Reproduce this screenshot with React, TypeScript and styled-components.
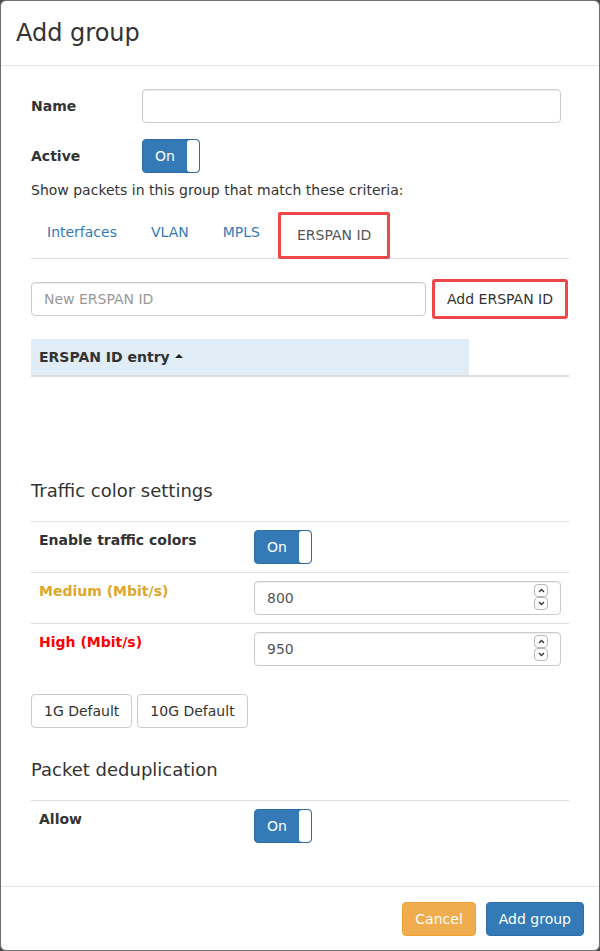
import React from "react";
import styled, { createGlobalStyle, css } from "styled-components";

const GlobalStyle = createGlobalStyle`
  * { box-sizing: border-box; }
  html, body {
    margin: 0;
    padding: 0;
    background: #4a4a4a;
    font-family: "DejaVu Sans", "Liberation Sans", sans-serif;
    font-size: 14px;
    line-height: 20px;
    color: #333;
  }
`;

const Modal = styled.div`
  display: flex;
  flex-direction: column;
  width: 600px;
  height: 951px;
  background: #fff;
  border: 1px solid #6f6f6f;
  border-radius: 6px;
  overflow: hidden;
`;

const Header = styled.div`
  padding: 15px;
  border-bottom: 1px solid #e5e5e5;
`;

const Title = styled.h4`
  margin: 0;
  font-size: 24px;
  font-weight: 400;
  line-height: 34px;
`;

const Body = styled.div`
  flex: 1;
  padding: 23px 30px 0;
`;

const FormRow = styled.div`
  display: flex;
  align-items: center;
  margin-bottom: 16px;
`;

const FieldLabel = styled.label`
  width: 111px;
  font-weight: 700;
`;

const TextInput = styled.input`
  display: block;
  height: 34px;
  padding: 6px 12px;
  font: inherit;
  color: #555;
  background: #fff;
  border: 1px solid #ccc;
  border-radius: 4px;
  box-shadow: inset 0 1px 1px rgba(0, 0, 0, 0.075);
  outline: none;
  &::placeholder { color: #999; }
`;

const NameInput = styled(TextInput)`
  width: 419px;
`;

const ToggleBox = styled.div`
  display: flex;
  width: 58px;
  height: 34px;
  background: #337ab7;
  border: 1px solid #2e6da4;
  border-radius: 4px;
  overflow: hidden;
`;

const ToggleText = styled.span`
  flex: 1;
  display: flex;
  align-items: center;
  justify-content: center;
  color: #fff;
  font-size: 14px;
`;

const ToggleKnob = styled.span`
  width: 12px;
  background: #fff;
  border-radius: 3px;
`;

function Toggle() {
  return (
    <ToggleBox>
      <ToggleText>On</ToggleText>
      <ToggleKnob />
    </ToggleBox>
  );
}

const HelpText = styled.p`
  margin: -9px 0 12px;
`;

const Tabs = styled.ul`
  display: flex;
  align-items: flex-start;
  list-style: none;
  margin: 0;
  padding: 0;
  height: 47px;
  border-bottom: 1px solid #ddd;
`;

const Tab = styled.li<{ $active?: boolean }>`
  margin-right: 2px;
  padding: 9px 15px 11px;
  border: 1px solid transparent;
  color: #337ab7;
  ${({ $active }) =>
    $active &&
    css`
      padding: 10px 16px;
      border: 3px solid #f04848;
      border-radius: 2px;
      color: #555;
      height: 47px;
    `}
`;

const AddRow = styled.div`
  display: flex;
  align-items: center;
  gap: 6px;
  margin-top: 20px;
`;

const IdInput = styled(TextInput)`
  width: 395px;
`;

const Button = styled.button<{ $variant?: "default" | "primary" | "warning"; $marked?: boolean }>`
  height: 34px;
  padding: 6px 12px;
  font: inherit;
  line-height: 20px;
  border-radius: 4px;
  border: 1px solid #ccc;
  background: #fff;
  color: #333;
  ${({ $variant }) =>
    $variant === "primary" &&
    css`
      background: #337ab7;
      border-color: #2e6da4;
      color: #fff;
    `}
  ${({ $variant }) =>
    $variant === "warning" &&
    css`
      background: #f0ad4e;
      border-color: #eea236;
      color: #fff;
    `}
  ${({ $marked }) =>
    $marked &&
    css`
      height: 40px;
      padding: 6px 12px;
      border: 3px solid #f04848;
      border-radius: 3px;
    `}
`;

const EntryTable = styled.div`
  display: flex;
  margin-top: 20px;
  border-bottom: 2px solid #ddd;
`;

const SortHeader = styled.div`
  width: 438px;
  padding: 8px;
  background: #e1edf6;
  font-weight: 700;
  display: flex;
  align-items: center;
  gap: 5px;
`;

const Caret = styled.span`
  width: 0;
  height: 0;
  border-left: 4px solid transparent;
  border-right: 4px solid transparent;
  border-bottom: 4px solid #222;
  margin-top: -2px;
`;

const SectionTitle = styled.h4<{ $top: number }>`
  margin: ${({ $top }) => $top}px 0 20px;
  font-size: 18px;
  font-weight: 400;
  line-height: 20px;
`;

const SettingsTable = styled.div`
  border-top: 1px solid #ddd;
`;

const SettingRow = styled.div<{ $last?: boolean }>`
  display: grid;
  grid-template-columns: 215px 1fr;
  border-bottom: ${({ $last }) => ($last ? "none" : "1px solid #ddd")};
`;

const Cell = styled.div`
  padding: 8px;
`;

const SettingLabel = styled.span<{ $color?: string }>`
  font-weight: 700;
  color: ${({ $color }) => $color || "#333"};
`;

const NumberWrap = styled.div`
  position: relative;
  width: 307px;
`;

const NumberInput = styled(TextInput)`
  width: 100%;
`;

const Spinner = styled.div`
  position: absolute;
  top: 3px;
  right: 13px;
  display: flex;
  flex-direction: column;
`;

const SpinBtn = styled.span`
  display: flex;
  align-items: center;
  justify-content: center;
  width: 14px;
  height: 13px;
  border: 1px solid #b8b8b8;
  border-radius: 4px;
  background: #fff;
`;

function NumberField({ value }: { value: string }) {
  return (
    <NumberWrap>
      <NumberInput defaultValue={value} />
      <Spinner>
        <SpinBtn>
          <svg width="7" height="5" viewBox="0 0 7 5">
            <path d="M1 4 L3.5 1.5 L6 4" fill="none" stroke="#333" strokeWidth="1.3" />
          </svg>
        </SpinBtn>
        <SpinBtn>
          <svg width="7" height="5" viewBox="0 0 7 5">
            <path d="M1 1 L3.5 3.5 L6 1" fill="none" stroke="#333" strokeWidth="1.3" />
          </svg>
        </SpinBtn>
      </Spinner>
    </NumberWrap>
  );
}

const ButtonRow = styled.div`
  display: flex;
  gap: 5px;
  margin-top: 20px;
`;

const Footer = styled.div`
  display: flex;
  justify-content: flex-end;
  gap: 10px;
  padding: 15px 15px 14px;
  border-top: 1px solid #e5e5e5;
`;

export default function App() {
  return (
    <>
      <GlobalStyle />
      <Modal>
        <Header>
          <Title>Add group</Title>
        </Header>
        <Body>
          <FormRow>
            <FieldLabel>Name</FieldLabel>
            <NameInput />
          </FormRow>
          <FormRow>
            <FieldLabel>Active</FieldLabel>
            <Toggle />
          </FormRow>
          <HelpText>Show packets in this group that match these criteria:</HelpText>
          <Tabs>
            <Tab>Interfaces</Tab>
            <Tab>VLAN</Tab>
            <Tab>MPLS</Tab>
            <Tab $active>ERSPAN ID</Tab>
          </Tabs>
          <AddRow>
            <IdInput placeholder="New ERSPAN ID" />
            <Button $marked>Add ERSPAN ID</Button>
          </AddRow>
          <EntryTable>
            <SortHeader>
              ERSPAN ID entry <Caret />
            </SortHeader>
          </EntryTable>

          <SectionTitle $top={104}>Traffic color settings</SectionTitle>
          <SettingsTable>
            <SettingRow>
              <Cell>
                <SettingLabel>Enable traffic colors</SettingLabel>
              </Cell>
              <Cell>
                <Toggle />
              </Cell>
            </SettingRow>
            <SettingRow>
              <Cell>
                <SettingLabel $color="#dea72a">Medium (Mbit/s)</SettingLabel>
              </Cell>
              <Cell>
                <NumberField value="800" />
              </Cell>
            </SettingRow>
            <SettingRow $last>
              <Cell>
                <SettingLabel $color="#ff0000">High (Mbit/s)</SettingLabel>
              </Cell>
              <Cell>
                <NumberField value="950" />
              </Cell>
            </SettingRow>
          </SettingsTable>
          <ButtonRow>
            <Button>1G Default</Button>
            <Button>10G Default</Button>
          </ButtonRow>

          <SectionTitle $top={32}>Packet deduplication</SectionTitle>
          <SettingsTable>
            <SettingRow $last>
              <Cell>
                <SettingLabel>Allow</SettingLabel>
              </Cell>
              <Cell>
                <Toggle />
              </Cell>
            </SettingRow>
          </SettingsTable>
        </Body>
        <Footer>
          <Button $variant="warning">Cancel</Button>
          <Button $variant="primary">Add group</Button>
        </Footer>
      </Modal>
    </>
  );
}
